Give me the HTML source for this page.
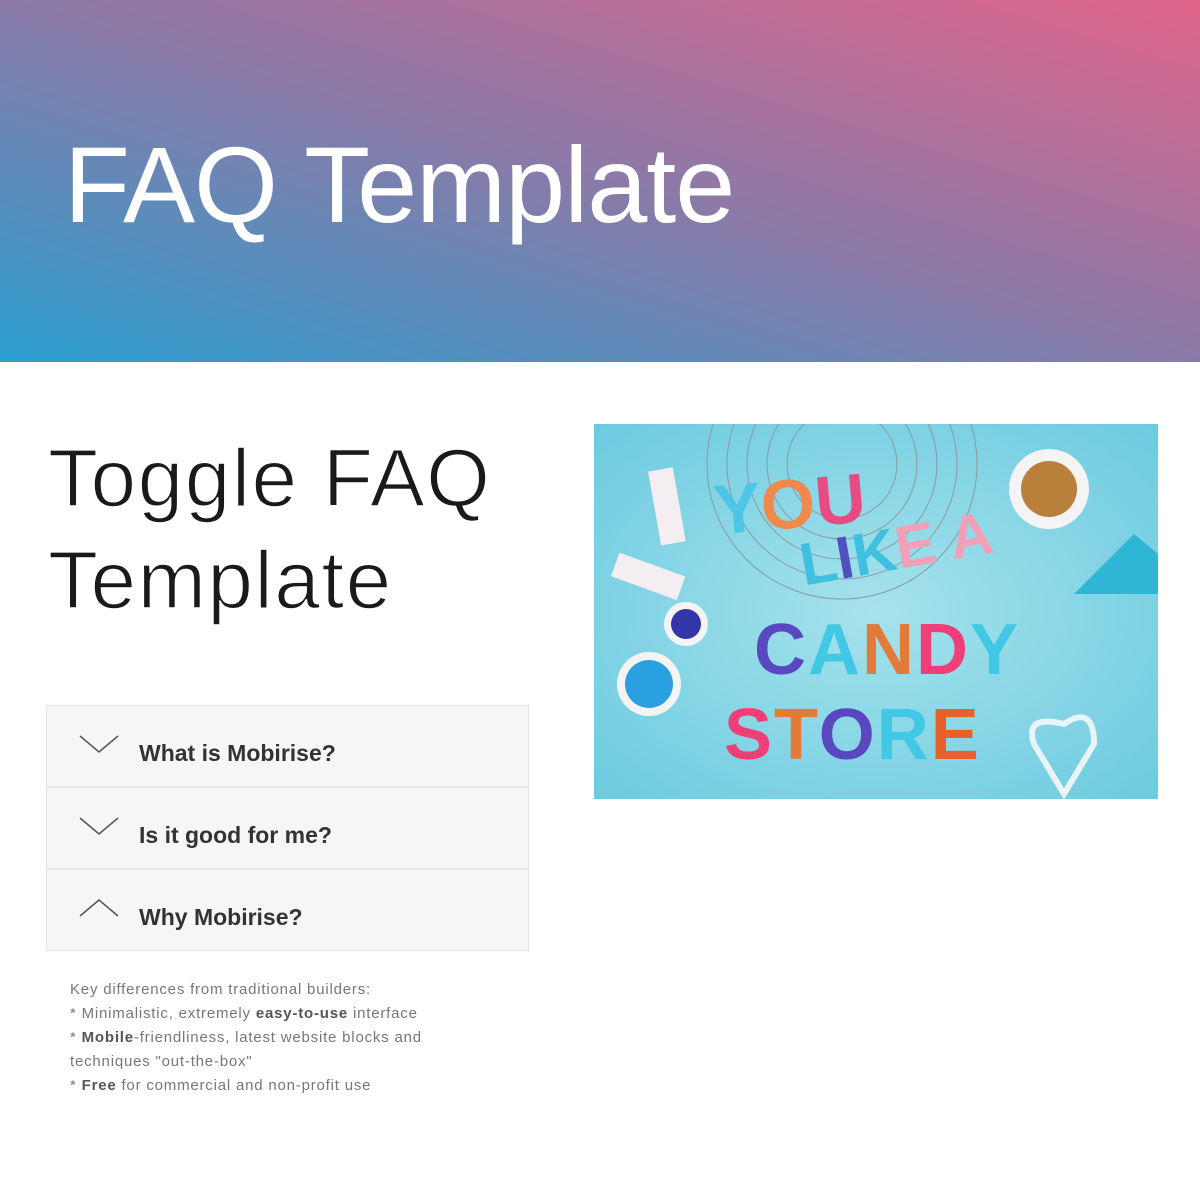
<!DOCTYPE html>
<html><head><meta charset="utf-8"><style>
*{margin:0;padding:0;box-sizing:border-box}
body{width:1200px;height:1200px;background:#fff;font-family:"Liberation Sans",sans-serif;position:relative;overflow:hidden}
.hdr{position:absolute;left:0;top:0;width:1200px;height:362px;background:linear-gradient(to top right,#2a9fd0 0%,#8a7aa8 50%,#e0648a 100%)}
.hdr h1{position:absolute;left:64px;top:122px;font-size:108px;font-weight:normal;color:#fff;letter-spacing:-1px}
.t2{position:absolute;left:48px;top:428px;font-size:82px;font-weight:normal;color:#1a1a1a;line-height:102px;letter-spacing:1.5px;-webkit-text-stroke:1.6px #fff}
.acc{position:absolute;left:46px;top:705px;width:483px;border:1px solid #e4e4e4;background:#f6f6f6}
.row{height:82px;border-bottom:2px solid #e6e6e6;position:relative}
.row:last-child{border-bottom:none;height:80px}
.row span{position:absolute;left:92px;top:34px;font-size:23px;font-weight:bold;color:#333}
.row svg{position:absolute;left:32px;top:28px}
.txt{position:absolute;left:70px;top:978px;font-size:15px;line-height:24px;color:#777;letter-spacing:0.8px}
.txt b{color:#555}
.img{position:absolute;left:594px;top:424px;width:564px;height:375px;background:#8fd6e4;overflow:hidden}
.l{position:absolute;font-weight:bold;font-family:"Liberation Sans",sans-serif}
</style></head><body>
<div class="hdr"><h1>FAQ Template</h1></div>
<div class="t2">Toggle FAQ<br>Template</div>
<div class="acc">
<div class="row"><svg width="40" height="20"><path d="M1 2 L20 18 L39 2" stroke="#555" stroke-width="1.5" fill="none"/></svg><span>What is Mobirise?</span></div>
<div class="row"><svg width="40" height="20"><path d="M1 2 L20 18 L39 2" stroke="#555" stroke-width="1.5" fill="none"/></svg><span>Is it good for me?</span></div>
<div class="row"><svg width="40" height="20"><path d="M1 18 L20 2 L39 18" stroke="#555" stroke-width="1.5" fill="none"/></svg><span>Why Mobirise?</span></div>
</div>
<div class="txt">Key differences from traditional builders:<br>* Minimalistic, extremely <b>easy-to-use</b> interface<br>* <b>Mobile</b>-friendliness, latest website blocks and<br>techniques "out-the-box"<br>* <b>Free</b> for commercial and non-profit use</div>
<div class="img">
<svg width="564" height="375" style="position:absolute;left:0;top:0">
<defs><radialGradient id="g" cx="50%" cy="50%" r="70%"><stop offset="0" stop-color="#a6e2ec"/><stop offset="1" stop-color="#6ccbe0"/></radialGradient></defs>
<rect width="564" height="375" fill="url(#g)"/>
<g stroke="#8a9aa0" fill="none" stroke-width="1">
<circle cx="248" cy="40" r="135"/><circle cx="248" cy="40" r="115"/><circle cx="248" cy="40" r="95"/><circle cx="248" cy="40" r="75"/><circle cx="248" cy="40" r="55"/></g>
<circle cx="455" cy="65" r="40" fill="#f4f4f4"/><circle cx="455" cy="65" r="28" fill="#b8803a"/>
<circle cx="92" cy="200" r="22" fill="#f4f4f4"/><circle cx="92" cy="200" r="15" fill="#3335a8"/>
<circle cx="55" cy="260" r="32" fill="#f4f4f4"/><circle cx="55" cy="260" r="24" fill="#2aa0e0"/>
<path d="M480 170 L540 110 L564 130 L564 170 Z" fill="#2fb6d4"/>
<path d="M470 370 L440 320 Q430 290 470 300 Q500 280 500 320 Z" fill="none" stroke="#e8f4f6" stroke-width="6"/>
<rect x="60" y="45" width="25" height="75" fill="#f4eef2" transform="rotate(-10 72 80)"/>
<rect x="20" y="140" width="70" height="25" fill="#f4eef2" transform="rotate(20 55 150)"/>
</svg>
<div class="l" style="left:120px;top:40px;font-size:70px;color:#e84a82;transform:rotate(-5deg)"><span style="color:#4cc6e4">Y</span><span style="color:#f08a4c">O</span>U</div>
<div class="l" style="left:205px;top:90px;font-size:60px;color:#40c0e0;transform:rotate(-10deg)">L<span style="color:#5050c0">I</span>K<span style="color:#f2a0b8">E</span> <span style="color:#f2a0b8">A</span></div>
<div class="l" style="left:160px;top:185px;font-size:72px;letter-spacing:2px"><span style="color:#5a48c0">C</span><span style="color:#40c8e4">A</span><span style="color:#e27a3a">N</span><span style="color:#f03e78">D</span><span style="color:#40c8e4">Y</span></div>
<div class="l" style="left:130px;top:270px;font-size:72px;letter-spacing:2px"><span style="color:#f03e78">S</span><span style="color:#e27a3a">T</span><span style="color:#5a48c0">O</span><span style="color:#40c8e4">R</span><span style="color:#e8602a">E</span></div>
</div>
</body></html>
